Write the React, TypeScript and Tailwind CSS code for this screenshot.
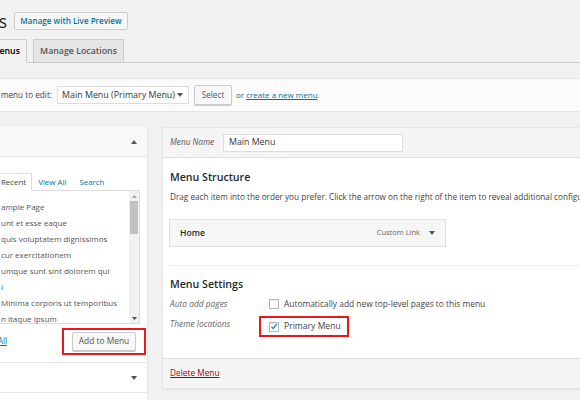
import React from "react";

function Caret({ up = false }: { up?: boolean }) {
  return (
    <svg width="6" height="4" viewBox="0 0 6 4" className="block">
      {up ? <path d="M0 4 L3 0 L6 4 Z" fill="#555" /> : <path d="M0 0 L6 0 L3 4 Z" fill="#555" />}
    </svg>
  );
}

function Checkbox({ checked = false }: { checked?: boolean }) {
  return (
    <span className="w-[10px] h-[10px] border border-[#b4b9be] bg-white shadow-[inset_0_1px_1px_rgba(0,0,0,0.1)] flex items-center justify-center shrink-0">
      {checked && (
        <svg width="9" height="9" viewBox="0 0 10 10">
          <path d="M1.8 5.2 L4 7.4 L8.4 2.2" fill="none" stroke="#1e8cbe" strokeWidth="1.7" />
        </svg>
      )}
    </span>
  );
}

const items = [
  "ample Page",
  "unt et esse eaque",
  "quis voluptatem dignissimos",
  "cur exercitationem",
  "umque sunt sint dolorem qui",
  "i",
  "Minima corporis ut temporibus",
  "n itaque ipsum",
];

export default function App() {
  return (
    <div className="w-[580px] h-[400px] overflow-hidden bg-[#f1f1f1] text-[#444] font-['Open_Sans',sans-serif] text-[7.9px]">
      {/* title row */}
      <div className="flex items-center h-[18px] mt-[12px]">
        <div className="w-[100px] ml-[-93px] text-right text-[17.5px] leading-[18px] text-[#23282d] whitespace-nowrap">
          Edit Menus
        </div>
        <div className="ml-[7px] h-[18px] w-[114px] border border-[#ccc] bg-[#f7f7f7] rounded-[2px] text-[#0073aa] font-semibold text-[8.1px] flex items-center justify-center whitespace-nowrap">
          Manage with Live Preview
        </div>
      </div>

      {/* nav tabs */}
      <div className="mt-[9px] h-[24px] border-b border-[#ccc] flex items-end gap-[6px]">
        <div className="-mb-px h-[24px] w-[70px] ml-[-43px] pr-[6px] text-right border border-[#ccc] border-b-[#f1f1f1] bg-[#f1f1f1] text-black font-semibold text-[8.8px] leading-[22px] whitespace-nowrap">
          Edit Menus
        </div>
        <div className="-mb-px h-[24px] w-[91px] border border-[#ccc] bg-[#e5e5e5] text-[#555] font-semibold text-[8.8px] leading-[22px] text-center whitespace-nowrap">
          Manage Locations
        </div>
      </div>

      {/* manage menus bar */}
      <div className="mt-[15px] h-[34px] bg-[#fbfbfb] border-y border-[#e5e5e5] flex items-center">
        <div className="w-[120px] ml-[-68px] text-right text-[#444] text-[8.2px] whitespace-nowrap">
          Select a menu to edit:
        </div>
        <div className="ml-[5px] w-[132px] h-[18px] bg-white border border-[#ddd] flex items-center pl-[4px] pr-[5px] text-[8.9px] text-[#32373c] whitespace-nowrap">
          <span className="flex-1">Main Menu (Primary Menu)</span>
          <Caret />
        </div>
        <div className="ml-[5px] w-[38px] h-[20px] bg-[#f7f7f7] border border-[#ccc] rounded-[2px] shadow-[0_1px_0_#ccc] flex items-center justify-center text-[#555] text-[8.2px]">
          Select
        </div>
        <div className="ml-[4px] text-[#555] text-[8px] whitespace-nowrap">
          or <span className="text-[#0073aa] underline">create a new menu</span>.
        </div>
      </div>

      {/* columns */}
      <div className="mt-[15px] flex items-start">
        {/* left column */}
        <div className="w-[148px] shrink-0 bg-white border-r border-[#e5e5e5]">
          <div className="h-[30px] bg-[#f8f8f8] border-b border-[#e5e5e5] flex items-center justify-end pr-[10px]">
            <Caret up />
          </div>
          <div className="pt-[16px] pr-[7px]">
            <div className="flex items-end h-[17px]">
              <div className="-ml-[10px] pl-[10px] pr-[5px] h-[18px] -mb-px border border-[#ddd] border-b-white bg-white text-[#444] leading-[16px] relative z-10">
                Recent
              </div>
              <div className="ml-[6px] text-[#0073aa] leading-[16px]">View All</div>
              <div className="ml-[13px] text-[#0073aa] leading-[16px]">Search</div>
            </div>
            <div className="-ml-[10px] h-[134px] border border-[#ddd] bg-white flex">
              <div className="flex-1 pl-[10px] pt-[8px]">
                {items.map((t, i) => (
                  <div key={i} className={`h-[16px] leading-[16px] whitespace-nowrap text-[8px] ${t === "i" ? "text-[#0073aa]" : "text-[#555]"}`}>
                    {t}
                  </div>
                ))}
              </div>
              <div className="w-[10px] bg-[#f1f1f1] flex flex-col items-center">
                <div className="h-[10px] flex items-center">
                  <svg width="5" height="3" viewBox="0 0 5 3"><path d="M0 3 L2.5 0 L5 3Z" fill="#a3a3a3" /></svg>
                </div>
                <div className="w-[8px] h-[33px] bg-[#c1c1c1]" />
                <div className="flex-1" />
                <div className="h-[10px] flex items-center">
                  <svg width="5" height="3" viewBox="0 0 5 3"><path d="M0 0 L5 0 L2.5 3Z" fill="#505050" /></svg>
                </div>
              </div>
            </div>
            <div className="mt-[4px] h-[27px] flex items-center justify-between">
              <span className="text-[#0073aa] underline -ml-[27px] text-[8.2px]">Select All</span>
              <span className="-mr-[6px] border-2 border-[#e8181b] w-[84px] h-[27px] flex items-center justify-center">
                <span className="w-[64px] h-[19px] bg-[#f7f7f7] border border-[#ccc] rounded-[2px] shadow-[0_1px_0_#ccc] flex items-center justify-center text-[#555] text-[8.4px] whitespace-nowrap">
                  Add to Menu
                </span>
              </span>
            </div>
            <div className="h-[7px]" />
          </div>
          <div className="h-[30px] border-t border-[#e5e5e5] flex items-center justify-end pr-[10px]">
            <Caret />
          </div>
          <div className="border-t border-[#e5e5e5] h-[20px]" />
        </div>

        {/* right panel */}
        <div className="ml-[14px] w-[480px] shrink-0 border border-[#e5e5e5] shadow-[0_1px_1px_rgba(0,0,0,0.04)]">
          <div className="h-[30px] bg-[#f5f5f5] border-b border-[#dfdfdf] flex items-center pl-[7px]">
            <span className="w-[53px] italic text-[#555] text-[8.2px] whitespace-nowrap">Menu Name</span>
            <div className="w-[180px] h-[18px] bg-white border border-[#ddd] flex items-center pl-[5px] text-[8.8px] text-[#32373c]">
              Main Menu
            </div>
          </div>
          <div className="bg-white pl-[7px] pt-[12px] pb-[21px]">
            <div className="h-[14px] leading-[14px] text-[10.6px] font-semibold text-[#23282d]">Menu Structure</div>
            <div className="mt-[7px] h-[12px] leading-[12px] whitespace-nowrap text-[#444] text-[8.2px]">
              Drag each item into the order you prefer. Click the arrow on the right of the item to reveal additional configuration options.
            </div>
            <div className="mt-[16px] -ml-[1px] w-[277px] h-[28px] bg-[#f6f6f6] border border-[#dfdfdf] flex items-center pl-[10px] pr-[10px]">
              <span className="flex-1 font-semibold text-[8.6px] text-[#23282d]">Home</span>
              <span className="text-[#666] text-[7.5px] mr-[9px]">Custom Link</span>
              <Caret />
            </div>
            <div className="mt-[18px] -ml-[1px] border-t border-[#eee]" />
            <div className="mt-[11px] h-[14px] leading-[14px] text-[10.6px] font-semibold text-[#23282d]">Menu Settings</div>
            <div className="mt-[3px] flex items-center h-[20px]">
              <span className="w-[99px] italic text-[#666] text-[8.4px]">Auto add pages</span>
              <Checkbox />
              <span className="ml-[5px] text-[#444] whitespace-nowrap text-[8.4px]">Automatically add new top-level pages to this menu</span>
            </div>
            <div className="mt-[2px] flex items-center h-[21px]">
              <span className="w-[89px] italic text-[#666] text-[8.4px] self-start pt-[2px]">Theme locations</span>
              <span className="w-[90px] h-[21px] border-2 border-[#e8181b] flex items-center pl-[8px]">
                <Checkbox checked />
                <span className="ml-[5px] text-[#444] whitespace-nowrap text-[8.6px]">Primary Menu</span>
              </span>
            </div>
          </div>
          <div className="h-[30px] bg-[#f5f5f5] border-t border-[#dfdfdf] flex items-center pl-[7px]">
            <span className="text-[#a00] underline text-[8.3px]">Delete Menu</span>
          </div>
        </div>
      </div>
    </div>
  );
}
